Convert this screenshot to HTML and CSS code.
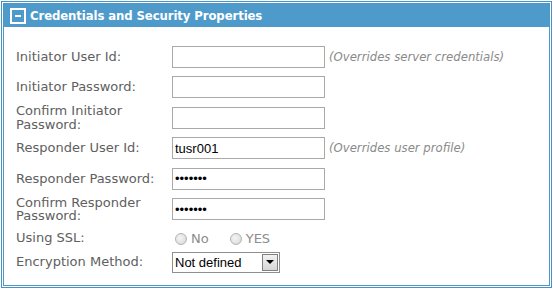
FILE: index.html
```html
<!DOCTYPE html>
<html>
<head>
<meta charset="utf-8">
<link rel="stylesheet" href="styles.css">
</head>
<body>
<div class="panel">
  <div class="box">
    <div class="header">
      <span class="toggle"><span class="dash"></span></span>
      <span class="title">Credentials and Security Properties</span>
    </div>
    <div class="content">
      <div class="row">
        <label class="lbl">Initiator User Id:</label>
        <input class="field" type="text">
        <span class="note">(Overrides server credentials)</span>
      </div>
      <div class="row">
        <label class="lbl">Initiator Password:</label>
        <input class="field" type="password">
      </div>
      <div class="row">
        <label class="lbl">Confirm Initiator Password:</label>
        <input class="field" type="password">
      </div>
      <div class="row">
        <label class="lbl">Responder User Id:</label>
        <input class="field" type="text" value="tusr001">
        <span class="note">(Overrides user profile)</span>
      </div>
      <div class="row">
        <label class="lbl">Responder Password:</label>
        <input class="field" type="password" value="1234567">
      </div>
      <div class="row">
        <label class="lbl">Confirm Responder Password:</label>
        <input class="field" type="password" value="1234567">
      </div>
      <div class="row short">
        <label class="lbl">Using SSL:</label>
        <span class="radios">
          <label class="opt"><input class="radio" type="radio" name="ssl" disabled>No</label>
          <label class="opt"><input class="radio" type="radio" name="ssl" disabled>YES</label>
        </span>
      </div>
      <div class="row last">
        <label class="lbl">Encryption Method:</label>
        <span class="selectwrap">
          <select class="sel"><option>Not defined</option></select>
          <span class="selbtn"><span class="arrow"></span></span>
        </span>
      </div>
    </div>
  </div>
</div>
</body>
</html>
```
FILE: styles.css
```css
html, body {
  margin: 0;
  padding: 0;
  background: #ffffff;
}
body {
  padding: 1px;
}
.panel {
  border: 1px solid #4592c6;
  padding: 1px;
}
.box {
  border: 1px solid #4b98c9;
}
.header {
  height: 23px;
  background: #4e9aca;
  display: flex;
  align-items: center;
  padding-left: 6px;
}
.toggle {
  width: 12px;
  height: 12px;
  border: 2px solid #ffffff;
  display: flex;
  align-items: center;
  justify-content: center;
  margin-right: 4px;
  margin-top: 1px;
}
.dash {
  width: 6px;
  height: 2px;
  background: #ffffff;
}
.title {
  color: #ffffff;
  font-family: "DejaVu Sans Condensed", "DejaVu Sans", Verdana, sans-serif;
  font-weight: bold;
  font-size: 13px;
  letter-spacing: -0.1px;
}
.content {
  padding: 14.25px 12px 13px 12px;
  font-family: "DejaVu Sans", Verdana, sans-serif;
  font-size: 13px;
}
.row {
  display: flex;
  align-items: center;
  height: 30.5px;
}
.row.short {
  height: 27.75px;
}
.row.last {
  height: 20px;
}
.lbl {
  width: 150px;
  flex: none;
  margin-right: 6px;
  color: #606060;
  line-height: 13.5px;
}
.field {
  box-sizing: border-box;
  width: 153px;
  height: 22px;
  margin: 0;
  border: 1px solid #a9a9a9;
  padding: 1px 2px;
  font-family: "Liberation Sans", Arial, sans-serif;
  font-size: 13px;
  color: #000000;
  outline: none;
}
.note {
  margin-left: 4px;
  color: #8a8a8a;
  font-style: italic;
  font-size: 11.7px;
}
.radios {
  display: flex;
  align-items: center;
  margin-left: 2px;
  margin-top: 1px;
}
.opt {
  display: flex;
  align-items: center;
  color: #8c8c8c;
  margin-right: 20px;
}
.radio {
  appearance: none;
  -webkit-appearance: none;
  width: 12px;
  height: 12px;
  margin: 0 4px 0 1px;
  border: 1px solid #b4b4b4;
  border-radius: 50%;
  background: radial-gradient(circle at 40% 40%, #f4f4f4 0%, #e2e2e2 60%, #d0d0d0 100%);
  box-sizing: border-box;
}
.selectwrap {
  display: flex;
  box-sizing: border-box;
  width: 108px;
  height: 21px;
  border: 1px solid #8f8f8f;
  background: #ffffff;
}
.sel {
  appearance: none;
  -webkit-appearance: none;
  flex: 1;
  min-width: 0;
  border: none;
  margin: 0;
  padding: 0 2px;
  background: #ffffff;
  font-family: "Liberation Sans", Arial, sans-serif;
  font-size: 13px;
  color: #000000;
  outline: none;
}
.selbtn {
  box-sizing: border-box;
  width: 16px;
  height: 17px;
  margin: 1px 1px 1px 0;
  border: 1px solid #808080;
  background: linear-gradient(#f2f2f2, #d6d6d6);
  display: flex;
  align-items: center;
  justify-content: center;
}
.arrow {
  width: 0;
  height: 0;
  border-left: 4px solid transparent;
  border-right: 4px solid transparent;
  border-top: 4px solid #000000;
}
```
